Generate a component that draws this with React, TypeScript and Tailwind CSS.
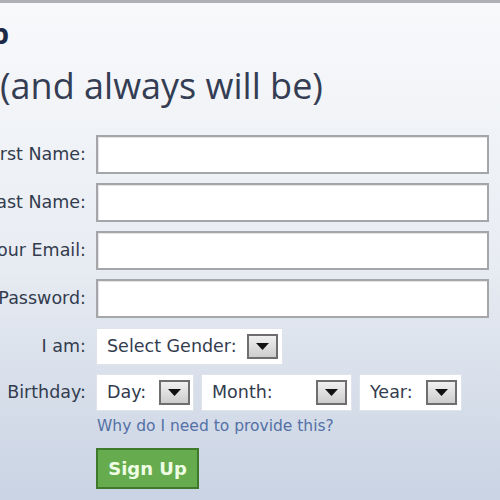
import React from "react";

const label = "font-['DejaVu_Sans',sans-serif] text-[17.5px] text-[#333c4e]";

function Arrow() {
  return (
    <span className="flex h-[25px] w-[31px] items-center justify-center border-2 border-[#6e6e6e] bg-gradient-to-b from-[#f0f0f0] to-[#cdcdcd]">
      <svg width="13" height="7" viewBox="0 0 13 7">
        <path d="M0 0 L13 0 L6.5 7 Z" fill="#111" />
      </svg>
    </span>
  );
}

function Dropdown({ text, width, pr }: { text: string; width: string; pr: string }) {
  return (
    <div className={`flex h-[37px] items-center border border-[#dfe3ea] bg-white pl-[10px] ${width} ${pr}`}>
      <span className={`${label} text-[#222]`}>{text}</span>
      <span className="ml-auto">
        <Arrow />
      </span>
    </div>
  );
}

function Row({ name }: { name: string }) {
  return (
    <div className="flex items-center gap-[10px]">
      <div className="flex w-[86px] justify-end whitespace-nowrap">
        <span className={label}>{name}</span>
      </div>
      <div className="h-[39px] w-[393px] border-2 border-[#a4a6aa] bg-white shadow-[inset_1px_1px_0_#e4e4e4]" />
    </div>
  );
}

export default function App() {
  return (
    <div className="h-[500px] w-[500px] overflow-hidden border-t-[3px] border-[#aeb0b5] bg-gradient-to-b from-[#f8f9fb] via-[#e9edf3] to-[#c9d3e3]">
      {/* заголовок */}
      <div className="mt-[12px] flex w-[9px] justify-end whitespace-nowrap">
        <span className="font-['Open_Sans',sans-serif] text-[29px] font-bold leading-[36px] text-[#1d2a45]">
          Sign Up
        </span>
      </div>
      <div className="mt-[13px] whitespace-nowrap font-['Open_Sans',sans-serif] text-[36px] leading-[44px] text-[#343d53]">
        (and always will be)
      </div>

      {/* поля */}
      <div className="mt-[27px] flex flex-col gap-[9px]">
        <Row name="First Name:" />
        <Row name="Last Name:" />
        <Row name="Your Email:" />
        <Row name="Password:" />
      </div>

      <div className="mt-[10px] flex items-center gap-[10px]">
        <div className="flex w-[86px] justify-end">
          <span className={label}>I am:</span>
        </div>
        <Dropdown text="Select Gender:" width="w-[187px]" pr="pr-[4px]" />
      </div>

      <div className="mt-[9px] flex items-center gap-[10px]">
        <div className="flex w-[86px] justify-end">
          <span className={label}>Birthday:</span>
        </div>
        <div className="flex gap-[7px]">
          <Dropdown text="Day:" width="w-[98px]" pr="pr-[3px]" />
          <Dropdown text="Month:" width="w-[151px]" pr="pr-[4px]" />
          <Dropdown text="Year:" width="w-[103px]" pr="pr-[4px]" />
        </div>
      </div>

      <div className="ml-[97px] mt-[4px] font-['DejaVu_Sans',sans-serif] text-[15.5px] text-[#5470a6]">
        Why do I need to provide this?
      </div>

      <button className="ml-[96px] mt-[10px] h-[41px] w-[103px] border-2 border-[#3f7a2c] bg-[#67ab4f] font-['DejaVu_Sans',sans-serif] text-[18px] font-bold text-[#eefde3]">
        Sign Up
      </button>
    </div>
  );
}
